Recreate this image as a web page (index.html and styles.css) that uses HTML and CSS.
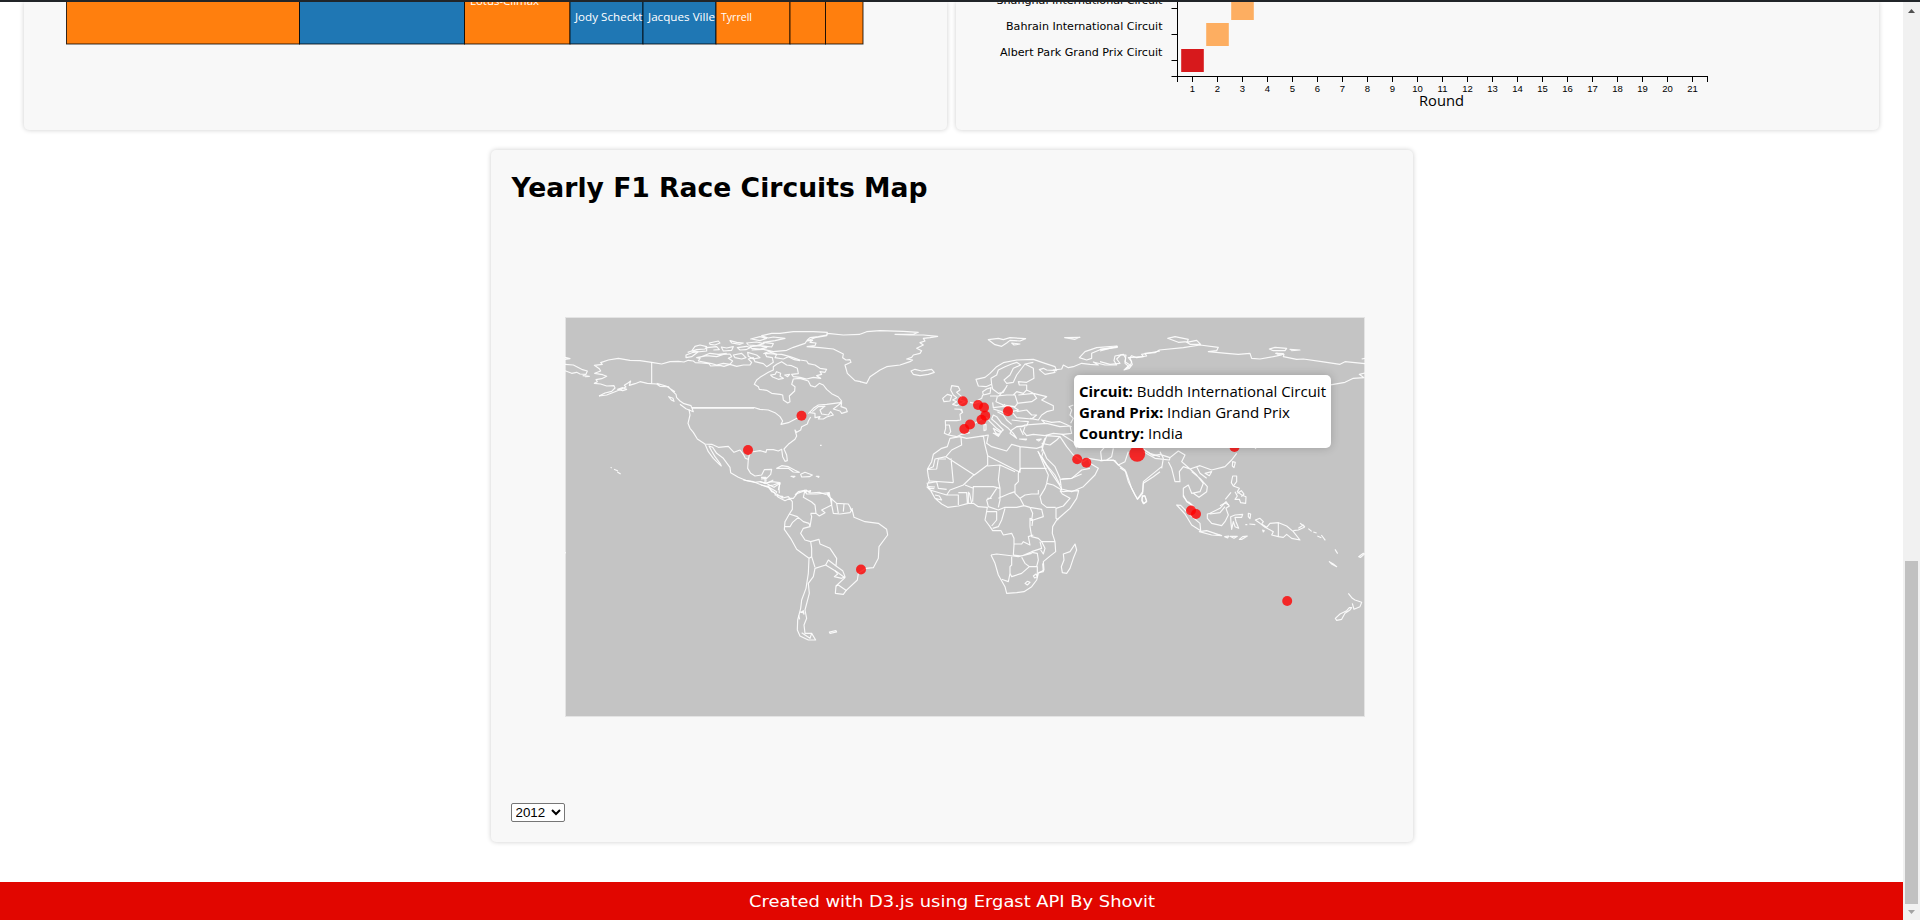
FILE: index.html
```html
<!DOCTYPE html>
<html lang="en">
<head>
<meta charset="utf-8">
<title>F1 Dashboard</title>
<link rel="stylesheet" href="styles.css">
</head>
<body>
<div class="topbar"></div>
<div class="window">
<div class="page">
  <main class="content">
    <div class="row">
      <section class="card chart-card">
        <svg class="treemap" width="923" height="128" viewBox="24 2 923 128">
          <g class="tiles">
            <rect class="orange" x="66.5" y="-20" width="233" height="64"/>
            <rect class="blue" x="299.5" y="-20" width="165" height="64"/>
            <rect class="orange" x="464.5" y="-20" width="105.5" height="64"/>
            <rect class="blue" x="570" y="-20" width="73" height="64"/>
            <rect class="blue" x="643" y="-20" width="73" height="64"/>
            <rect class="orange" x="716" y="-20" width="74" height="64"/>
            <rect class="orange" x="790" y="-20" width="35.5" height="64"/>
            <rect class="orange" x="825.5" y="-20" width="37.5" height="64"/>
          </g>
          <g class="tile-text">
            <text x="470" y="4.5" textLength="69" lengthAdjust="spacingAndGlyphs">Lotus-Climax</text>
            <text x="575" y="21" textLength="67.5" lengthAdjust="spacingAndGlyphs">Jody Scheckt</text>
            <text x="648" y="21" textLength="67" lengthAdjust="spacingAndGlyphs">Jacques Ville</text>
            <text x="721" y="21" textLength="31" lengthAdjust="spacingAndGlyphs">Tyrrell</text>
          </g>
        </svg>
      </section>
      <section class="card chart-card">
        <svg class="heatmap" width="923" height="128" viewBox="956 2 923 128">
          <rect class="warm" x="1231.2" y="-3" width="22.6" height="23"/>
          <rect class="warm" x="1206.2" y="23" width="22.6" height="23"/>
          <rect class="hot" x="1181.2" y="49" width="22.6" height="23"/>
          <path class="axis" d="M1177.5 0V76.5M1171.5 8.5h6M1171.5 34.5h6M1171.5 60.5h6M1171.5 76.5H1707.5M1177.5 76V82M1707.5 76V82M1192.5 76v6m25-6v6m25-6v6m25-6v6m25-6v6m25-6v6m25-6v6m25-6v6m25-6v6m25-6v6m25-6v6m25-6v6m25-6v6m25-6v6m25-6v6m25-6v6m25-6v6m25-6v6m25-6v6m25-6v6m25-6v6"/>
          <g class="circuit-labels">
            <text x="996.5" y="4" textLength="166" lengthAdjust="spacingAndGlyphs">Shanghai International Circuit</text>
            <text x="1006" y="30" textLength="156.5" lengthAdjust="spacingAndGlyphs">Bahrain International Circuit</text>
            <text x="1000" y="56" textLength="162.5" lengthAdjust="spacingAndGlyphs">Albert Park Grand Prix Circuit</text>
          </g>
          <g class="rounds">
            <text x="1192.5" y="92">1</text><text x="1217.5" y="92">2</text><text x="1242.5" y="92">3</text><text x="1267.5" y="92">4</text><text x="1292.5" y="92">5</text><text x="1317.5" y="92">6</text><text x="1342.5" y="92">7</text><text x="1367.5" y="92">8</text><text x="1392.5" y="92">9</text><text x="1417.5" y="92">10</text><text x="1442.5" y="92">11</text><text x="1467.5" y="92">12</text><text x="1492.5" y="92">13</text><text x="1517.5" y="92">14</text><text x="1542.5" y="92">15</text><text x="1567.5" y="92">16</text><text x="1592.5" y="92">17</text><text x="1617.5" y="92">18</text><text x="1642.5" y="92">19</text><text x="1667.5" y="92">20</text><text x="1692.5" y="92">21</text>
          </g>
          <text class="axis-title" x="1419" y="106" textLength="45" lengthAdjust="spacingAndGlyphs">Round</text>
        </svg>
      </section>
    </div>
    <section class="card map-card">
      <h2 class="title"><svg width="430" height="40" viewBox="0 0 430 40"><text x="0.5" y="27" textLength="416" lengthAdjust="spacingAndGlyphs">Yearly F1 Race Circuits Map</text></svg></h2>
      <div class="map">
        <svg width="800" height="400" viewBox="565 317 800 400">
          <rect class="sea" x="565.5" y="317.5" width="799" height="399"/>
          <!-- North America and the Arctic islands -->
          <g class="land" transform="translate(560 315) scale(.33333)">
            <path d="M117 243L135 234 155 229 165 219 162 212 140 213 122 207 103 205 112 200 108 194 125 191 140 184 128 179 104 175 122 168 118 161 103 151 127 148 122 143 145 135 175 130 210 136 240 137 275 142 305 147 330 140 355 139 372 141 385 136 400 138 406 143 425 144 447 146 452 153 480 151 492 154 510 148 530 154 550 150 570 150 575 142 565 132 580 128 585 140 597 143 610 146 620 155 628 150 640 142 637 128 620 125 615 115 640 117 665 118 690 125 705 130 720 135 740 138 745 146 765 150 780 160 800 163 795 172 780 170 785 178 770 182 782 190 760 187 740 192 720 187 700 185 695 178 715 176 712 160 695 152 680 150 665 140 650 148 640 155 640 165 625 172 600 187 590 195 583 208 595 215 598 223 620 226 635 235 660 238 668 240 670 255 683 264 690 260 688 243 704 228 705 215 695 208 700 192 720 190 745 198 752 212 765 216 778 205 790 210 800 223 815 236 835 246 845 258 840 263 800 268 775 270 760 280 745 296M757 290L775 275 795 274 780 285 785 297 805 300 812 290 820 300 800 306 790 312 775 312 780 305 765 308 765 295 750 293M820 282L845 263 843 275 858 280 862 290 845 295 840 288Z"/>
            <path d="M117 243L140 240 165 230 185 222 198 216 193 211 205 203 212 198 208 211 225 206 240 200 262 205 275 206 275 142M275 206L290 207 300 214 325 215 335 226 348 238 350 248 360 258 372 266 393 272 397 282 400 290 378 281 360 268M290 205L318 213 345 230M326 245l13 5 3 9-8-4zM173 223l15-5 12 5-12 4zM15 148L40 150 65 163 82 168 78 178 60 177 50 172 35 175 15 167M15 127L30 131 15 133M68 182L88 184 75 185M397 279.5H582M395 277.5H582L600 283 625 285 645 293 660 305 668 318 663 328 685 323 705 313 720 305"/>
            <path d="M387 283L390 300 384 325 390 340 400 352 412 372 435 387 445 410 460 430 478 448 484 453 480 445 465 425 455 408 447 393 458 397 470 415 490 430 510 457 512 473 535 487 560 497 585 502 600 500M432 387L455 388 475 397 505 394 522 412 540 405 550 418 556 430 567 434M742 327L745 318 752 306M742 327L725 335 722 345 710 352 705 345 710 363 705 373 685 388 672 402 680 420 682 437 675 439 668 425 665 403 655 408 640 404 620 404 618 412 600 407 575 411 568 420 565 433 563 460 572 475 585 483 605 480 613 464 635 463 632 478 620 490 603 492M603 487H618V500"/>
            <path d="M650 460L665 452 685 455 705 466 718 472 700 471 685 460ZM722 478L735 472 757 480 748 485 725 486ZM693 484l12 0-4 3zM769 484l8 0-1 3zM600 500L615 505 635 500 660 503 657 518 658 535M603 510L625 515 635 530 645 533M615 504V490M618 514L640 510 660 503M705 540L715 530 738 525 750 534 778 532 795 538 808 536M152 457l3 2M162 463l12 5M172 471l10 6M780 391l5 0"/>
            <path d="M383 112L395 108 405 94 420 90 440 95 435 102 410 104 395 108 415 110 395 125 378 128 378 120 400 112 440 108 440 98 470 95 478 104 460 105M410 128L440 122 470 125 490 118 510 117 515 125 505 130 518 138 510 148 490 145 470 150 455 146 435 142 415 138 420 130ZM420 127L450 115 475 118 500 115M448 84L475 78 480 84 465 90 450 88ZM484 96L500 99 520 95 515 106 490 108ZM510 77L530 82 550 84 540 88 515 84ZM532 98L560 94 570 98 558 104 540 105ZM520 120L545 115 558 128 545 132 525 128ZM563 112L590 120 600 128 580 132 565 124ZM570 95L600 92 620 98 600 102 575 100ZM572 72L600 65 620 70 600 77 575 72ZM560 84L590 81 612 86 590 92 565 90ZM575 105L610 103 640 110 680 106 700 97 735 85 742 75 750 68 775 65 800 60 802 52 760 50 700 50 660 55 635 55 605 62 625 69 640 66 675 70 645 77 610 82 640 86 635 96 600 92M610 116L625 110 650 118 645 128 670 132 685 125 703 134 720 137M632 180L645 178 650 170 662 175 660 184 670 190 655 193 638 186ZM674 180l15-2-6 7zM740 95L765 92 768 84 750 82 758 76 740 78 765 68 800 62 803 55 850 60 900 58M740 95L780 98 820 102 850 117 848 128 858 135 870 134 873 142 855 150 862 175 885 197 902 200"/>
          </g>
          <!-- Europe, North Africa and western Asia -->
          <g class="land" transform="translate(860 315) scale(.33333)">
            <path d="M0 58L20 50 60 47 130 49 175 52 160 58 105 58 150 60 190 60 233 64 210 68 190 70 195 78 180 83 190 90 170 100 185 107 180 115 160 120 155 127 140 132 158 135 150 140 120 150 80 155 60 165 50 172 30 185 20 205 0 200M153 168L165 163 185 168 215 163 223 172 205 178 180 182 160 178ZM385 74L415 70 430 74 450 68 497 71 480 78 450 76 440 84 425 94 405 89ZM455 84l25 3-18 3zM614 68L660 67 645 73ZM658 128L675 110 710 98 770 93 772 97 720 104 695 115 695 130 680 135Z"/>
            <path d="M378 215L355 213 348 193 375 187 390 175 410 155 430 143 470 135 520 133 555 145 585 155 590 167 560 165 550 160 538 164 555 178 585 172 580 165 605 162 610 150 625 158 640 155 665 145 690 148 715 150 700 141 735 150 770 150 762 137 765 123 790 118 797 130 795 145 805 153 795 163 810 155 815 140 805 128 850 125 845 118 900 108M378 215L395 208 393 190 410 180 415 165 435 155 455 147 470 142 482 150 460 160 450 180 432 195 440 205 460 202 470 180 495 147 520 142M495 147L520 160 522 190 500 202 475 200 478 210 500 210 500 225 490 235 470 230 460 240M395 208L398 222 415 235 430 232 442 210M415 245L430 228 440 215M368 230L380 222 393 218 390 235 370 240ZM350 258L365 250 368 240M390 243L412 243 440 240 465 240 473 265 465 275 430 270 408 260 412 245M475 240L520 235 530 250 515 260 470 265M500 225L520 235 560 245 545 255 580 272 580 285 560 290 545 300M435 268L425 275 400 278 398 262M425 275L460 275 475 285 455 290M470 290L500 285 515 300 530 300 515 312 470 308 455 290M545 300L535 315 510 310M455 315L480 318 505 320 500 332 470 335"/>
            <path d="M283 282L305 283 308 292 300 298 302 315 290 317 256 317 257 340 253 355 265 360 272 350 268 330 256 330M265 360L290 365 305 358 330 353M308 292L300 282M330 262L345 265 360 260M345 325L360 315 380 308 390 320 410 340 425 350 415 362 405 350 400 340 420 352 430 345 410 325 395 312 400 300 410 305 425 325 445 340 460 355 470 370 450 355 455 345 470 335 485 335 495 330 520 328 560 325 600 335 630 333 635 355 610 358 580 355 555 362 520 358 500 362 490 350 495 335M480 340L490 360M412 290L430 300 440 315 455 328M400 282L425 290 445 300M372 330L378 328 378 345 372 347ZM400 355l20 2-5 7zM478 372l22 0-2 3zM530 374l14-2-8 6zM555 325L545 315 575 322 600 320 635 335"/>
            <path d="M275 212L295 215 300 225 290 232 305 245 300 255 315 260 290 272 278 268 290 260 278 255 290 248 280 240 272 225ZM248 250L262 238 275 242 270 258 252 260ZM300 365L270 370 262 395 245 400 220 418 215 440 202 463M300 365L320 370 375 362 385 360 380 385 395 395 440 408 455 388 480 395 530 400 545 395 555 370 545 410M303 367L305 390 275 405 258 425 225 432 220 455 202 463M480 395L480 472 383 422 375 390 370 362M482 460H560M258 425L343 480 383 450 383 422M273 430L280 503 M533 408L552 440 575 475 595 505 605 522 635 530 670 515 705 480 715 460 690 445 685 430 670 440 640 420 620 395 600 365 560 362 552 385M545 385L570 390 590 375 600 365M545 395L560 430 585 455 600 490M605 492L635 490 665 465 690 460M605 358L640 380 650 400M685 430L725 437 740 435 765 437 775 450 795 465 805 500 825 540 833 552 848 535 850 505 880 485 900 470M846 545l8-3 6 18-10 6-4-8zM725 437L722 410 735 395M740 435L755 425 760 400M640 270L627 275 635 285 630 300 640 310 632 325M850 402L870 415 900 425"/>
            <path d="M202 463L230 462 235 432 258 432M210 498L280 503"/>
          </g>
          <!-- Siberia and South-East Asia -->
          <g class="land" transform="translate(1100 315) scale(.33333)">
            <path d="M0 108L52 94 40 97 0 103M0 140L30 148 60 145 50 132 62 120 78 120 75 140 90 150 72 165 88 160 97 148 90 128 95 122 110 128 140 123 135 115 165 113 178 105 250 98 300 90 355 97 350 107 325 110 380 115 415 118 450 115 455 130 480 132 520 125 545 120 530 115 552 118 550 125 590 133 610 132 665 140 720 148 735 140 795 146M203 70L225 65 265 73 262 80 235 82ZM260 82L290 76 302 88 270 88ZM508 102L525 97 560 100 555 107 520 107ZM570 103L600 105 575 107ZM527 115L550 116 535 120ZM795 174L778 178 792 188 760 190 735 202 700 208 680 212M785 132L795 130"/>
            <path d="M128 402L160 422 180 418 210 428 208 435 165 430 130 410M180 410L190 430 185 460M210 428L235 408 255 420 245 440 270 462 250 455 238 470 240 500 225 500 215 460 205 440M185 455L130 500 128 530 112 553 95 520 78 470 60 458M0 437L40 435 55 450 75 440 85 410M128 542l7 1 5 15-8 8-6-10zM270 462L300 452 335 465 375 455 395 435 410 415M315 475l20-5-7 12zM398 440l8 2-4 16-5-5zM270 462L290 480 310 505 300 530 275 535 265 510 250 520 250 545 262 560 285 580M275 470L300 490 322 515 320 530 297 547 280 535M290 455L300 475 320 490M465 398l3 4"/>
          </g>
          <!-- South America -->
          <g class="land" transform="translate(560 480) scale(.33333)">
            <path d="M550 0L580 5 605 15 625 22 642 38 655 52 675 62 690 55 700 55 712 40 735 32 740 42 770 42 808 38 805 48 830 70 865 72 878 95 882 112 915 125 955 130 980 148 983 165 957 200 955 235 940 263 918 265 895 280 892 300 858 332 850 343 826 340 828 318 855 293 830 275 797 255 765 265 760 290 745 310 748 340 735 390 740 415 732 435 735 460 755 460 767 480 745 480 720 468 712 450 713 420 722 385 725 360 738 325 745 280 747 235 710 208 692 175 673 148 675 125 688 102 697 88 697 65 685 50 668 54 650 42M625 20L650 35 645 45 670 50M600 5L620 10 640 0M622 12L642 22 660 10 655 30"/>
            <path d="M735 30L730 52 755 66 765 75 768 100 778 108 795 98 785 90 815 75 808 40M815 55L815 75 820 100 840 102 870 98 878 85M830 70L835 100M852 72L850 95M688 102L712 110 730 125 747 130 750 140 730 145 722 160 735 180 752 185 755 205 755 230 765 262M752 100L755 110 750 140M752 100L768 100M675 140L690 140 697 128 715 112M747 235L755 230M752 185L777 178 780 192 810 205 830 235 828 258 805 240 797 255M830 235L828 258 848 272 855 290 845 295 823 290 833 282 825 272M828 318L835 315 860 332M720 395L733 400M725 458L750 475 755 460M808 456l20-4 2 4-20 4z M14 219l4-1"/>
            <path d="M733 30l4 8 4-8M744 34l8-2-2 6M805 38l-3 7 7 2M870 85l8 8M722 398l8-6 2 12M716 406l3 12"/>
          </g>
          <!-- Africa -->
          <g class="land" transform="translate(900 420) scale(.33333)">
            <path d="M82 148L85 170 88 182 82 195 92 212 105 235 125 252 143 262 175 258 205 250 220 250 235 260 262 262 258 285 255 300 270 320 278 332 303 332 310 345 335 340 342 355 342 375 340 405M273 405L285 430 295 465 315 500 320 520 350 518 372 515 395 500 410 480 415 460 432 450 430 425 448 410 467 395 465 365 457 340 458 320 470 300 510 265 530 235 536 212 510 213 490 215 480 212M480 212L487 222 510 235 490 258 468 265 468 295 475 300M467 262L440 262 425 250 420 230 435 205 440 190 460 195 485 210M440 190L445 165 435 143 415 95M362 145L355 160 355 185 345 195 345 220 360 235 375 225 395 222 415 222 415 210M262 138L300 135 345 155M223 163L190 195 150 210 140 225 90 210 80 200M300 135L295 180 300 205 280 200 220 200 218 245M80 190L110 185 115 205 140 208M195 195L220 205M290 205L270 235 260 240 265 260 295 270 315 262 350 262 372 257 390 262 425 268 430 290 400 300 390 295 390 320 395 350 415 355 425 365 465 365M295 235L330 220 345 215M300 205L300 240 295 262M360 235L372 257M258 275H290L290 300 275 318M315 265L305 300 295 320 278 325M390 262L398 280 395 300M275 235L262 235M140 225H175L175 255M175 218H200L202 250M205 215V250M208 218L215 250M105 225L118 228 125 240 105 235"/>
            <path d="M342 372L365 372 370 365 390 375 385 350 400 345M340 405L365 408 395 395 425 385 420 365M273 405L290 402 340 408 355 410 395 400M335 410V435L330 440V460L335 470 365 460 388 440 412 440 412 470M330 460L325 485 305 478M365 412L375 430 388 440M395 397L412 400 415 420 410 440M425 365L435 385 430 402 422 390M375 490L382 484 390 487 382 495ZM400 468l8-6 4 8-8 4zM415 458L430 455 428 430M525 372L530 390 520 415 510 445 500 460 487 458 484 440 492 420 490 402 510 395ZM390 300L398 302 396 318M85 200l20 1M85 205l18 1M480 175L485 210M480 178L515 175 545 162M430 95L425 110 440 135 465 165 480 195"/>
          </g>
          <!-- Indonesia, Melanesia and New Zealand -->
          <g class="land" transform="translate(1120 440) scale(.33333)">
            <path d="M170 195L182 196 210 225 240 250 242 272 215 255 195 222ZM238 275L260 272 305 287 275 285ZM314 290l12-2-3 6zM330 289l22 0-10 6zM358 298l10-8 14-2-16 10zM262 222L270 220 300 205 318 185 328 198 318 205 325 225 315 245 305 257 275 250 262 235ZM270 222L300 218 315 200M332 230L345 225 368 223 365 232 345 232 348 245 356 265 345 260 340 245 335 268 333 250ZM385 220L392 222 390 236 385 230ZM376 254l6 0M388 252l18 2M406 240L420 235 430 245 425 252 440 262 450 250 476 248 500 258 520 275 540 300 515 295 500 283 490 292 475 290 455 285 460 275 435 262 420 250ZM475 248V290M428 270l5 2-3 4zM520 272L535 270 553 262 550 255 535 265M540 250l15 10M565 266l10 8M580 276l10 3M592 288l12 5M604 285l12 16M645 328l8 13M628 365L640 372 650 380 636 373ZM716 350L730 340 733 342 722 352ZM685 460L697 475 705 480 725 487 720 500 702 508 697 490M695 503L690 510 675 520 665 538 650 541 646 535 660 522 680 512 688 503Z"/>
            <path d="M338 108L350 108 350 125 340 138 334 128ZM340 138L358 145 352 155 365 165 378 170 377 190 362 188 358 178 345 178 352 168 345 155M352 160l12-8 8 10-8 8M316 178L333 157M190 165L200 185 220 197M205 185l15 13M300 197l15-8 12 6"/>
          </g>
          <g class="spots">
            <circle cx="801.5" cy="415.8" r="5"/><circle cx="748" cy="450" r="5"/><circle cx="861" cy="569.5" r="5"/><circle cx="962.8" cy="401.2" r="5"/><circle cx="978" cy="405" r="5"/><circle cx="984" cy="407.5" r="5"/><circle cx="985.3" cy="415.8" r="5"/><circle cx="981.5" cy="419.8" r="5"/><circle cx="970" cy="424.5" r="5"/><circle cx="964.3" cy="429" r="5"/><circle cx="1008" cy="411.2" r="5"/><circle cx="1077.2" cy="459.2" r="5"/><circle cx="1086.3" cy="462.7" r="5"/><circle cx="1137.2" cy="453.8" r="8"/><circle cx="1234.5" cy="447" r="5"/><circle cx="1191" cy="510.5" r="5"/><circle cx="1196" cy="514" r="5"/><circle cx="1287.2" cy="601" r="5"/>
          </g>
        </svg>
        <div class="tooltip">
          <svg width="257" height="73" viewBox="1074 375 257 73">
            <text x="1079" y="397" textLength="247" lengthAdjust="spacingAndGlyphs"><tspan class="strong">Circuit:</tspan> Buddh International Circuit</text>
            <text x="1079" y="418" textLength="211" lengthAdjust="spacingAndGlyphs"><tspan class="strong">Grand Prix:</tspan> Indian Grand Prix</text>
            <text x="1079" y="439" textLength="104" lengthAdjust="spacingAndGlyphs"><tspan class="strong">Country:</tspan> India</text>
          </svg>
        </div>
      </div>
      <select class="year"><option>2012</option></select>
    </section>
  </main>
  <footer class="footer"><svg width="410" height="38" viewBox="0 0 410 38"><text x="2" y="25" textLength="406" lengthAdjust="spacingAndGlyphs">Created with D3.js using Ergast API By Shovit</text></svg></footer>
</div>
<div class="scrollbar">
  <svg class="arrow" width="17" height="17" viewBox="0 0 17 17"><path fill="#505050" d="M5 11h7L8.500 7z"/></svg>
  <div class="thumb"></div>
  <svg class="arrow" width="17" height="16" viewBox="0 0 17 16"><path fill="#a3a3a3" d="M5 6h7L8.500 10z"/></svg>
</div>
</div>
</body>
</html>
```
FILE: styles.css
```css
* { box-sizing: border-box; }
body {
  margin: 0;
  height: 920px;
  overflow: hidden;
  background: #fff;
  color: #000;
  font-family: "Open Sans", "Noto Sans", sans-serif;
}
svg { display: block; }
.topbar { height: 2px; background: #212529; }
.window { display: flex; height: 918px; }
.page { width: 1903px; display: flex; flex-direction: column; overflow: hidden; }
.content { height: 880px; display: flex; flex-direction: column; align-items: center; gap: 19.500px; }
.row { display: flex; gap: 9px; }
.card {
  width: 923px;
  background: #f8f8f8;
  border-radius: 5px;
  box-shadow: 0 0 5px rgba(0, 0, 0, .2);
}
.chart-card { height: 128px; border-radius: 0 0 5px 5px; }
.tiles rect { stroke: #000; stroke-opacity: .8; stroke-width: 1; }
.orange { fill: #ff7f0e; }
.blue { fill: #1f77b4; }
.tile-text text { fill: #fff; font-size: 11.600px; }
.warm { fill: #fdae61; }
.hot { fill: #d7191c; }
.axis { fill: none; stroke: #000; stroke-width: 1; }
.circuit-labels { font: 10.500px "DejaVu Sans", sans-serif; }
.rounds { font: 9.500px "Liberation Sans", sans-serif; text-anchor: middle; }
.axis-title { font-size: 15px; }
.map-card {
  width: 922px;
  height: 692.500px;
  padding: 20px;
  display: flex;
  flex-direction: column;
  align-items: flex-start;
}
.title { margin: 0; height: 40px; }
.title text { font: bold 27px "DejaVu Sans", sans-serif; }
.map { position: relative; margin: 107.500px 0 0 54.500px; }
.sea { fill: #c4c4c4; stroke: #e4e4e4; }
.land path {
  fill: none;
  stroke: #fff;
  stroke-width: 1.150;
  stroke-opacity: .9;
  stroke-linejoin: round;
  vector-effect: non-scaling-stroke;
}
.spots circle { fill: red; fill-opacity: .8; }
.tooltip {
  position: absolute;
  left: 509px;
  top: 58px;
  width: 257px;
  height: 73px;
  background: #fff;
  border-radius: 5px;
  box-shadow: 0 0 10px rgba(0, 0, 0, .2);
}
.tooltip text { font-size: 15px; }
.strong { font-weight: 700; }
.year {
  margin-top: auto;
  width: 54px;
  height: 19px;
  padding: 0;
  border: 1px solid #767676;
  border-radius: 2px;
  background: #fff;
  color: #000;
  font: 13.333px "Liberation Sans", sans-serif;
}
.footer {
  height: 38px;
  display: flex;
  justify-content: center;
  background: #e10600;
}
.footer text { fill: #fff; font: 16px "DejaVu Sans", sans-serif; }
.scrollbar {
  width: 17px;
  display: flex;
  flex-direction: column;
  align-items: center;
  background: #f1f1f1;
}
.scrollbar .thumb { margin-top: auto; width: 13px; height: 343px; background: #c1c1c1; }
```
